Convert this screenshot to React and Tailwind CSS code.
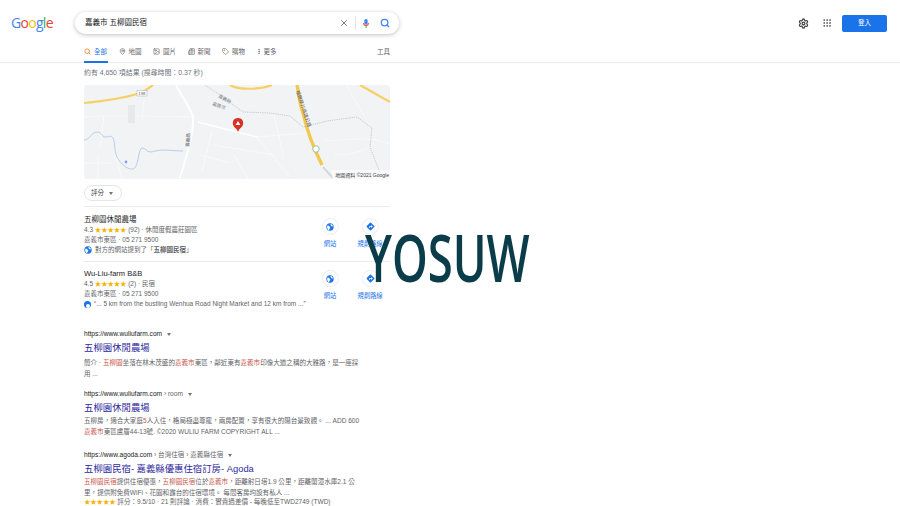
import React from "react";
import { Search, MapPin, Image, Newspaper, Tag, MoreVertical, X, Settings, Grip } from "lucide-react";

const FONT = "font-['Liberation_Sans','Noto_Sans_CJK_TC',sans-serif]";

// Fullwidth punctuation used by the Chinese snippets
const C = "\uFF0C";
const COLON = "\uFF1A";

// Red highlighted words in the snippets
const Em = ({ children }) => <span className="text-[#c9564e]">{children}</span>;

const Stars = ({ className = "" }) => (
  <span className={`text-[#f4b400] text-[6.5px] tracking-[-0.2px] ${className}`}>★★★★★</span>
);

const Caret = () => (
  <span className="inline-block w-0 h-0 ml-[5px] align-middle border-x-[2px] border-x-transparent border-t-[3px] border-t-[#70757a]" />
);

const Tab = ({ icon, label, active }) => (
  <div className={`h-[13px] flex items-center gap-[3px] ${active ? "text-[#1a73e8]" : "text-[#5f6368]"}`}>
    {icon}
    <span>{label}</span>
  </div>
);

const GlobeIcon = () => (
  <svg width="8" height="8" viewBox="0 0 24 24">
    <circle cx="12" cy="12" r="11" fill="#1a73e8" />
    <path d="M4 8c3-1 5 0 6 2s3 2 3 4-2 2-3 5l-1 3C5 20 2 14 4 8zM14 3c4 1 6 4 7 7-3 1-5 0-6-2s-3-3-1-5z" fill="#fff" />
  </svg>
);

const DirectionsIcon = () => (
  <svg width="9" height="9" viewBox="0 0 24 24">
    <rect x="4" y="4" width="16" height="16" rx="2" transform="rotate(45 12 12)" fill="#1a73e8" />
    <path d="M8 16v-4a1 1 0 0 1 1-1h5V8l4 4-4 4v-3h-4v3z" fill="#fff" />
  </svg>
);

const ActionButton = ({ icon, label }) => (
  <div className="w-[40px] flex flex-col items-center">
    <div className="w-[17px] h-[17px] rounded-full border border-[#eceef0] bg-white flex items-center justify-center">
      {icon}
    </div>
    <div className="mt-[4px] text-[6.3px] leading-[9px] text-[#1a73e8]">{label}</div>
  </div>
);

const Place = ({ name, rating, count, kind, snippet, snippetIcon, className, actionsClass }) => (
  <div className={`flex border-t border-[#ebebeb] ${className}`}>
    <div className="w-[232px] shrink-0 whitespace-nowrap">
      <div className="text-[7.5px] leading-[11px] text-[#202124]">{name}</div>
      <div className="text-[6.5px] leading-[10px] text-[#5f6368]">
        {rating} <Stars /> ({count}) · {kind}
      </div>
      <div className="text-[6.5px] leading-[10px] text-[#5f6368]">嘉義市東區 · 05 271 9500</div>
      <div className="text-[6.5px] leading-[10px] text-[#5f6368] flex items-center gap-[3px]">
        {snippetIcon}
        <span>{snippet}</span>
      </div>
    </div>
    <div className={`flex ml-[-6px] ${actionsClass}`}>
      <ActionButton icon={<GlobeIcon />} label="網站" />
      <ActionButton icon={<DirectionsIcon />} label="規劃路線" />
    </div>
  </div>
);

const Result = ({ crumbs, title, children, className = "", bodyClass = "mt-[1px]" }) => (
  <div className={className}>
    <div className="text-[6.6px] leading-[10px] text-[#202124] whitespace-nowrap">
      {crumbs}
      <Caret />
    </div>
    <div className="text-[9.4px] leading-[14px] mt-[2px] text-[#2f2a9c] whitespace-nowrap">{title}</div>
    <div className={`text-[6.55px] leading-[10.5px] text-[#5f6368] w-[290px] whitespace-nowrap ${bodyClass}`}>{children}</div>
  </div>
);

const MapPanel = () => (
  <div className="h-[94px] rounded-[3px] overflow-hidden bg-[#f1f3f4]">
    <svg width="306" height="94" viewBox="0 0 306 94">
      <g fill="none" stroke="#fbfbfc" strokeWidth="0.8">
        <path d="M0 32c20-2 60-1 109 0M20 30l-4 34M60 14l-2 20M0 78h30M14 70v24M30 62l8 32M114 37l59 15 33 40M130 60l60 10M150 70l14 24M128 46l-10 40M240 55c20 2 40-6 66 4M250 70c20 0 36-6 40-12M262 0l20 34M173 52l50-4M190 30l10 44M116 70l30 8" />
      </g>
      <path d="M44 20h7v18h-7z" fill="#e6e8ea" />
      <path d="M92 0c6 12 14 22 17 32 1 20-8 42-13 61" fill="none" stroke="#ffffff" strokeWidth="2" />
      <path d="M114 37l59 15" fill="none" stroke="#ffffff" strokeWidth="1.4" />
      <path d="M0 18c20-2 40-5 53-9 7-2 12-6 16-9" fill="none" stroke="#f6cf65" strokeWidth="2.2" />
      <path d="M146 0c8 5 30 5 42 0" fill="none" stroke="#f6cf65" strokeWidth="2.2" />
      <path d="M276 0l30 17" fill="none" stroke="#f6cf65" strokeWidth="2.2" />
      <path d="M213 0c2 10 3 20 6 28 4 18 11 36 19 52" fill="none" stroke="#f2c94f" strokeWidth="3.4" />
      <path d="M239 82l10 11" fill="none" stroke="#d5d7da" strokeWidth="2" />
      <path d="M0 55c5 0 8-8 13-8s5 5 8 5 6-2 8 1 1 13 4 19 10 13 16 12 5-21 9-21 5 4 8 4 8-2 13-2 15 1 20 1" fill="none" stroke="#a7c5ea" strokeWidth="0.8" />
      <circle cx="42" cy="77" r="1.4" fill="#7fa8e0" />
      <path d="M121 0l15 10 23 17 27 1 20 3 13 11 24-6 30-4 15 11-2 19 10 26" fill="none" stroke="#9aa0a6" strokeWidth="0.5" strokeDasharray="1.2 1" />
      <rect x="53" y="5.5" width="10" height="5.5" fill="#fff" stroke="#9aa0a6" strokeWidth="0.4" />
      <text x="54.2" y="10" fontSize="4.4" fill="#5f6368">198</text>
      <circle cx="232" cy="64" r="3.2" fill="#fff" stroke="#5f9e6e" strokeWidth="0.6" />
      <text x="134" y="12" fontSize="4.6" fill="#80868b" transform="rotate(30 134 12)">嘉義縣</text>
      <text x="128" y="20" fontSize="4.6" fill="#80868b" transform="rotate(20 128 20)">嘉義市</text>
      <text x="105" y="62" fontSize="4.6" fill="#5f6368" transform="rotate(-85 105 62)">嘉義路</text>
      <text x="212" y="6" fontSize="4.8" fill="#5f6368" transform="rotate(72 212 6)">福爾摩沙高速公路</text>
      <path d="M154 33c-4 0-5.2 3-5.2 5.2 0 4 4.2 4.8 5.2 8.8 1-4 5.2-4.8 5.2-8.8 0-2.2-1.2-5.2-5.2-5.2z" fill="#d93025" />
      <path d="M154 36l2.4 4h-4.8z" fill="#fff" />
      <rect x="248" y="85" width="58" height="9" fill="#ffffff" fillOpacity="0.55" />
      <text x="305" y="92" fontSize="5" textAnchor="end" fill="#3c4043">地圖資料 ©2021 Google</text>
    </svg>
  </div>
);

export default function App() {
  return (
    <div className={`relative w-[900px] h-[506px] overflow-hidden bg-white ${FONT}`}>
      <header className="h-[63px] border-b border-[#ececec] relative">
        <div className="h-[46px] pt-[12px] pl-[11px] pr-[13px] flex items-start">
          <div className="w-[64px] pt-[1px] text-[14px] leading-[20px] font-['Open_Sans',sans-serif] font-medium tracking-[-0.7px]">
            <span className="text-[#4285f4]">G</span>
            <span className="text-[#ea4335]">o</span>
            <span className="text-[#fbbc05]">o</span>
            <span className="text-[#4285f4]">g</span>
            <span className="text-[#34a853]">l</span>
            <span className="text-[#ea4335]">e</span>
          </div>
          <div className="w-[324px] h-[22px] rounded-full bg-white shadow-[0_1px_4px_rgba(32,33,36,0.28)] flex items-center pl-[10px] pr-[9px]">
            <span className="text-[7.5px] text-[#202124] flex-1">嘉義市 五柳園民宿</span>
            <X className="w-[10px] h-[10px] text-[#5f6368]" strokeWidth={2} />
            <div className="w-px h-[14px] bg-[#e3e5e8] ml-[6px] mr-[5px]" />
            <svg width="10" height="11" viewBox="0 0 24 24" className="mr-[9px]">
              <rect x="8" y="1" width="8" height="14" rx="4" fill="#4285f4" />
              <path d="M5 11a7 7 0 0 0 14 0h-2.4a4.6 4.6 0 0 1-9.2 0z" fill="#ea4335" />
              <rect x="11" y="18" width="2.4" height="5" fill="#34a853" />
            </svg>
            <Search className="w-[10px] h-[10px] text-[#4285f4]" strokeWidth={3} />
          </div>
          <div className="ml-auto flex items-center h-[22px]">
            <Settings className="w-[11px] h-[11px] text-[#3c4043]" strokeWidth={2.6} />
            <Grip className="w-[10px] h-[10px] ml-[13px] text-[#5f6368]" strokeWidth={2.4} />
            <button className="ml-[10px] w-[45px] h-[17px] rounded-[2px] bg-[#1a73e8] text-white text-[6.5px]">登入</button>
          </div>
        </div>
        <nav className="absolute left-[84px] top-[45px] w-[306px] flex items-center gap-[11.5px] text-[6.5px]">
          <Tab active label="全部" icon={<Search className="w-[7px] h-[7px] text-[#ea8a35]" strokeWidth={3} />} />
          <Tab label="地圖" icon={<MapPin className="w-[7px] h-[7px]" />} />
          <Tab label="圖片" icon={<Image className="w-[7px] h-[7px]" />} />
          <Tab label="新聞" icon={<Newspaper className="w-[7px] h-[7px]" />} />
          <Tab label="購物" icon={<Tag className="w-[7px] h-[7px]" />} />
          <Tab label="更多" icon={<MoreVertical className="w-[6px] h-[7px] -mx-[1px]" strokeWidth={3} />} />
          <span className="ml-auto text-[#5f6368]">工具</span>
        </nav>
        <div className="absolute left-[84px] bottom-[-1px] w-[24px] h-[2px] bg-[#1a73e8]" />
      </header>

      <main className="w-[306px] ml-[84px]">
        <div className="h-[22px] pt-[5px] text-[6.9px] leading-[10px] text-[#70757a]">約有 4,650 項結果 (搜尋時間{COLON}0.37 秒)</div>
        <MapPanel />
        <div className="h-[27px] pt-[6px]">
          <div className="w-[38px] h-[16px] rounded-full border border-[#e3e5e8] flex items-center pl-[6px] text-[6.5px] text-[#3c4043]">
            評分
            <Caret />
          </div>
        </div>
        <Place
          className="h-[55px] pt-[7px]"
          actionsClass="pt-[4px]"
          name="五柳園休閒農場"
          rating="4.3"
          count="92"
          kind="休閒度假農莊園區"
          snippetIcon={<GlobeIcon />}
          snippet={<>對方的網站提到了「<b>五柳園民宿</b>」</>}
        />
        <Place
          className="h-[52px] pt-[6px]"
          actionsClass="pt-[2px]"
          name="Wu-Liu-farm B&B"
          rating="4.5"
          count="2"
          kind="民宿"
          snippetIcon={
            <span className="w-[7px] h-[7px] rounded-full bg-[#1a73e8] flex items-end justify-center">
              <span className="w-[4px] h-[4px] rounded-full bg-white" />
            </span>
          }
          snippet="“... 5 km from the bustling Wenhua Road Night Market and 12 km from ...”"
        />
        <Result className="mt-[16px]" bodyClass="mt-[3px]" crumbs="https://www.wuliufarm.com" title="五柳園休閒農場">
          簡介 · <Em>五柳園</Em>坐落在林木茂盛的<Em>嘉義市</Em>東區{C}鄰近東有<Em>嘉義市</Em>印像大道之稱的大雅路{C}是一座採<br />用 ...
        </Result>
        <Result
          className="mt-[10px]"
          crumbs={<>https://www.wuliufarm.com<span className="text-[#5f6368]"> › room</span></>}
          title="五柳園休閒農場"
        >
          五柳房{C}適合大家庭<Em>5</Em>人入住{C}格局極盡尊寵{C}兩房配置{C}享有很大的陽台景致觀。 ... ADD 600<br />
          <Em>嘉義市</Em>東區盧厝44-13號. ©2020 WULIU FARM COPYRIGHT ALL ...
        </Result>
        <Result
          className="mt-[13px]"
          crumbs={<>https://www.agoda.com<span className="text-[#5f6368]"> › 台灣住宿 › 嘉義縣住宿</span></>}
          title="五柳園民宿- 嘉義縣優惠住宿訂房- Agoda"
        >
          <Em>五柳園民宿</Em>提供住宿優惠{C}<Em>五柳園民宿</Em>位於<Em>嘉義市</Em>{C}距離射日塔1.9 公里{C}距離蘭潭水庫2.1 公<br />
          里{C}提供附免費WiFi、花園和露台的住宿環境。 每間客房均設有私人 ...
          <div className="whitespace-nowrap -mt-[1px]"><Stars /> 評分{COLON}9.5/10 · 21 則評論 · 消費{COLON}實貴過差價 - 每晚低至TWD2749 (TWD)</div>
        </Result>
      </main>

      {/* watermark sits over the page */}
      <div className="absolute left-[365px] top-[215px] origin-left scale-x-[0.7] text-[65px] leading-[84px] font-semibold text-[#0b3c49] font-['Open_Sans',sans-serif] whitespace-nowrap">
        YOSUW
      </div>
    </div>
  );
}
